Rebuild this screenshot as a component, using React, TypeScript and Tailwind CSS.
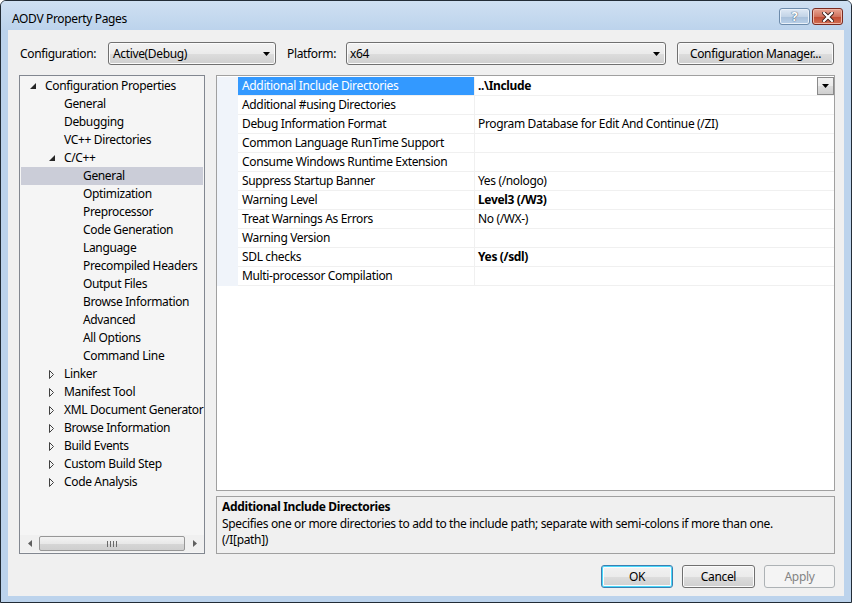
import React from 'react';

type TreeItem = { label: string; level: 0 | 1 | 2; expander?: 'open' | 'closed'; selected?: boolean };

const treeItems: TreeItem[] = [
  { label: 'Configuration Properties', level: 0, expander: 'open' },
  { label: 'General', level: 1 },
  { label: 'Debugging', level: 1 },
  { label: 'VC++ Directories', level: 1 },
  { label: 'C/C++', level: 1, expander: 'open' },
  { label: 'General', level: 2, selected: true },
  { label: 'Optimization', level: 2 },
  { label: 'Preprocessor', level: 2 },
  { label: 'Code Generation', level: 2 },
  { label: 'Language', level: 2 },
  { label: 'Precompiled Headers', level: 2 },
  { label: 'Output Files', level: 2 },
  { label: 'Browse Information', level: 2 },
  { label: 'Advanced', level: 2 },
  { label: 'All Options', level: 2 },
  { label: 'Command Line', level: 2 },
  { label: 'Linker', level: 1, expander: 'closed' },
  { label: 'Manifest Tool', level: 1, expander: 'closed' },
  { label: 'XML Document Generator', level: 1, expander: 'closed' },
  { label: 'Browse Information', level: 1, expander: 'closed' },
  { label: 'Build Events', level: 1, expander: 'closed' },
  { label: 'Custom Build Step', level: 1, expander: 'closed' },
  { label: 'Code Analysis', level: 1, expander: 'closed' },
];

const indent = { 0: 'pl-[9px]', 1: 'pl-[28px]', 2: 'pl-[47px]' };

const properties = [
  { name: 'Additional Include Directories', value: '..\\Include', bold: true, selected: true },
  { name: 'Additional #using Directories', value: '' },
  { name: 'Debug Information Format', value: 'Program Database for Edit And Continue (/ZI)' },
  { name: 'Common Language RunTime Support', value: '' },
  { name: 'Consume Windows Runtime Extension', value: '' },
  { name: 'Suppress Startup Banner', value: 'Yes (/nologo)' },
  { name: 'Warning Level', value: 'Level3 (/W3)', bold: true },
  { name: 'Treat Warnings As Errors', value: 'No (/WX-)' },
  { name: 'Warning Version', value: '' },
  { name: 'SDL checks', value: 'Yes (/sdl)', bold: true },
  { name: 'Multi-processor Compilation', value: '' },
];

// win7 style gradients
const btnFace = 'bg-[linear-gradient(to_bottom,#f2f2f2_0%,#ebebeb_50%,#dddddd_51%,#cfcfcf_100%)]';

const DownArrow = () => (
  <svg width="7" height="4" viewBox="0 0 7 4">
    <polygon points="0,0 7,0 3.5,4" fill="#000" />
  </svg>
);

const Expander = ({ kind }: { kind: 'open' | 'closed' }) =>
  kind === 'open' ? (
    <svg width="6" height="6" viewBox="0 0 6 6">
      <polygon points="6,0 6,6 0,6" fill="#262626" />
    </svg>
  ) : (
    <svg width="6" height="9" viewBox="0 0 6 9">
      <polygon points="0.5,0.5 4.5,4.5 0.5,8.5" fill="none" stroke="#404040" strokeWidth="1" />
    </svg>
  );

const Combo = ({ text, width, pad }: { text: string; width: string; pad: string }) => (
  <div
    className={`${width} h-[23px] flex items-center justify-between rounded-[3px] border border-[#707070] ${btnFace} shadow-[inset_0_0_0_1px_#fbfbfb] ${pad} pr-[5px]`}
  >
    <span>{text}</span>
    <DownArrow />
  </div>
);

const Button = ({
  children,
  width,
  variant = 'normal',
}: {
  children: React.ReactNode;
  width: string;
  variant?: 'normal' | 'default' | 'disabled';
}) => {
  const look =
    variant === 'default'
      ? `border-[#3c7fb1] ${btnFace} shadow-[inset_0_0_0_1px_#48d8fb,inset_0_0_0_2px_#fafcfd]`
      : variant === 'disabled'
        ? 'border-[#adb2b5] bg-[#f4f4f4] text-[#838383]'
        : `border-[#707070] ${btnFace} shadow-[inset_0_0_0_1px_#fbfbfb]`;
  return (
    <div className={`${width} h-[23px] flex items-center justify-center rounded-[3px] border ${look}`}>
      {children}
    </div>
  );
};

const TitleButton = ({ kind }: { kind: 'help' | 'close' }) =>
  kind === 'help' ? (
    <div className="w-[31px] h-[17px] rounded-[3px] border border-[#6d8bab] bg-[linear-gradient(to_bottom,#dfe9f5_0%,#c3d4e7_50%,#a9c0da_51%,#b9d0e9_100%)] flex items-center justify-center shadow-[inset_0_0_0_1px_#eaf1f9]">
      <span className="text-[13px] leading-none font-bold text-white [text-shadow:0_0_1px_#3a516b,0_0_1px_#3a516b]">?</span>
    </div>
  ) : (
    <div className="w-[31px] h-[17px] rounded-[3px] border border-[#7a2a20] bg-[linear-gradient(to_bottom,#e8a493_0%,#d1735e_50%,#c14a31_51%,#d16e54_100%)] flex items-center justify-center shadow-[inset_0_0_0_1px_#efb8a9]">
      <svg width="12" height="10" viewBox="0 0 12 10">
        <path d="M2 1 L10 9 M10 1 L2 9" stroke="#3b1d18" strokeWidth="4" strokeLinecap="square" />
        <path d="M2 1 L10 9 M10 1 L2 9" stroke="#fff" strokeWidth="2.2" strokeLinecap="square" />
      </svg>
    </div>
  );

const ScrollArrow = ({ dir }: { dir: 'left' | 'right' }) => (
  <svg width="4" height="7" viewBox="0 0 4 7">
    <polygon points={dir === 'left' ? '4,0 4,7 0,3.5' : '0,0 0,7 4,3.5'} fill="#606060" />
  </svg>
);

export default function App() {
  return (
    <div className="w-[852px] h-[603px] flex flex-col border border-[#222c36] rounded-t-[6px] bg-[#bcd3ec] font-['Noto_Sans',sans-serif] text-[12px] tracking-[-0.35px] text-black leading-[16px] overflow-hidden">
      {/* title bar */}
      <div className="h-[29px] shrink-0 flex items-center pl-[11px] pr-[8px] bg-[linear-gradient(to_bottom,#cfe0f2_0%,#bcd3ec_100%)]">
        <span className="flex-1 pt-[6px]">AODV Property Pages</span>
        <div className="flex gap-[2px] pt-[2px]">
          <TitleButton kind="help" />
          <TitleButton kind="close" />
        </div>
      </div>

      {/* client area */}
      <div className="flex-1 mx-[7px] mb-[6px] bg-[#f0f0f0] flex flex-col pl-[11px] pr-[9px] pt-[12px] pb-[8px]">
        <div className="h-[23px] flex items-center pl-px">
          <span className="w-[88px]">Configuration:</span>
          <Combo text="Active(Debug)" width="w-[168px]" pad="pl-[4px]" />
          <span className="ml-[11px] w-[59px]">Platform:</span>
          <Combo text="x64" width="w-[320px]" pad="pl-[3px]" />
          <div className="ml-[11px]">
            <Button width="w-[157px]">Configuration Manager...</Button>
          </div>
        </div>

        <div className="mt-[10px] h-[479px] flex gap-[11px]">
          {/* tree */}
          <div className="w-[186px] border border-[#828790] bg-[#f5f5f5] flex flex-col">
            <div className="flex-1 pt-px px-px overflow-hidden">
              {treeItems.map((item, i) => (
                <div
                  key={i}
                  className={`h-[18px] flex items-center whitespace-nowrap ${indent[item.level]} ${item.selected ? 'bg-[#cbcdd8]' : ''}`}
                >
                  <span className="w-[15px] shrink-0 flex items-center">
                    {item.expander && <Expander kind={item.expander} />}
                  </span>
                  <span>{item.label}</span>
                </div>
              ))}
            </div>
            <div className="h-[17px] mb-px flex items-center bg-[#f0f0f0]">
              <div className="w-[19px] flex justify-center">
                <ScrollArrow dir="left" />
              </div>
              <div className="flex-1 h-[15px] rounded-[2px] border border-[#979797] bg-[linear-gradient(to_bottom,#f3f3f3_0%,#e8e8e8_50%,#d6d6d6_51%,#cfcfcf_100%)] flex items-center justify-center gap-[2px]">
                <div className="w-px h-[6px] bg-[#6a6a6a]" />
                <div className="w-px h-[6px] bg-[#6a6a6a]" />
                <div className="w-px h-[6px] bg-[#6a6a6a]" />
                <div className="w-px h-[6px] bg-[#6a6a6a]" />
              </div>
              <div className="w-[19px] flex justify-center">
                <ScrollArrow dir="right" />
              </div>
            </div>
          </div>

          {/* property grid + description */}
          <div className="flex-1 flex flex-col gap-[5px]">
            <div className="h-[416px] border border-[#a0a0a0] bg-white pt-px">
              {properties.map((p, i) => (
                <div key={i} className="flex h-[19px]">
                  <div className="w-[21px] bg-[#f0f4fa]" />
                  <div
                    className={`w-[237px] pl-[4px] flex items-center border-r border-b border-[#f0f0f0] whitespace-nowrap ${p.selected ? 'bg-[#3399ff] text-white' : ''}`}
                  >
                    {p.name}
                  </div>
                  <div className={`flex-1 pl-[3px] flex items-center border-b border-[#f0f0f0] ${p.bold ? 'font-bold' : ''}`}>
                    <span className="flex-1">{p.value}</span>
                    {p.selected && (
                      <div className={`w-[17px] h-[18px] border border-[#8a8a8a] ${btnFace} flex items-center justify-center`}>
                        <DownArrow />
                      </div>
                    )}
                  </div>
                </div>
              ))}
            </div>
            <div className="flex-1 border border-[#a0a0a0] bg-[#f0f0f0] pl-[5px] pt-[2px]">
              <div className="font-bold">Additional Include Directories</div>
              <div className="mt-px">Specifies one or more directories to add to the include path; separate with semi-colons if more than one.</div>
              <div>(/I[path])</div>
            </div>
          </div>
        </div>

        <div className="mt-[11px] flex justify-end gap-[9px]">
          <Button width="w-[72px]" variant="default">OK</Button>
          <Button width="w-[73px]">Cancel</Button>
          <Button width="w-[71px]" variant="disabled">Apply</Button>
        </div>
      </div>
    </div>
  );
}
